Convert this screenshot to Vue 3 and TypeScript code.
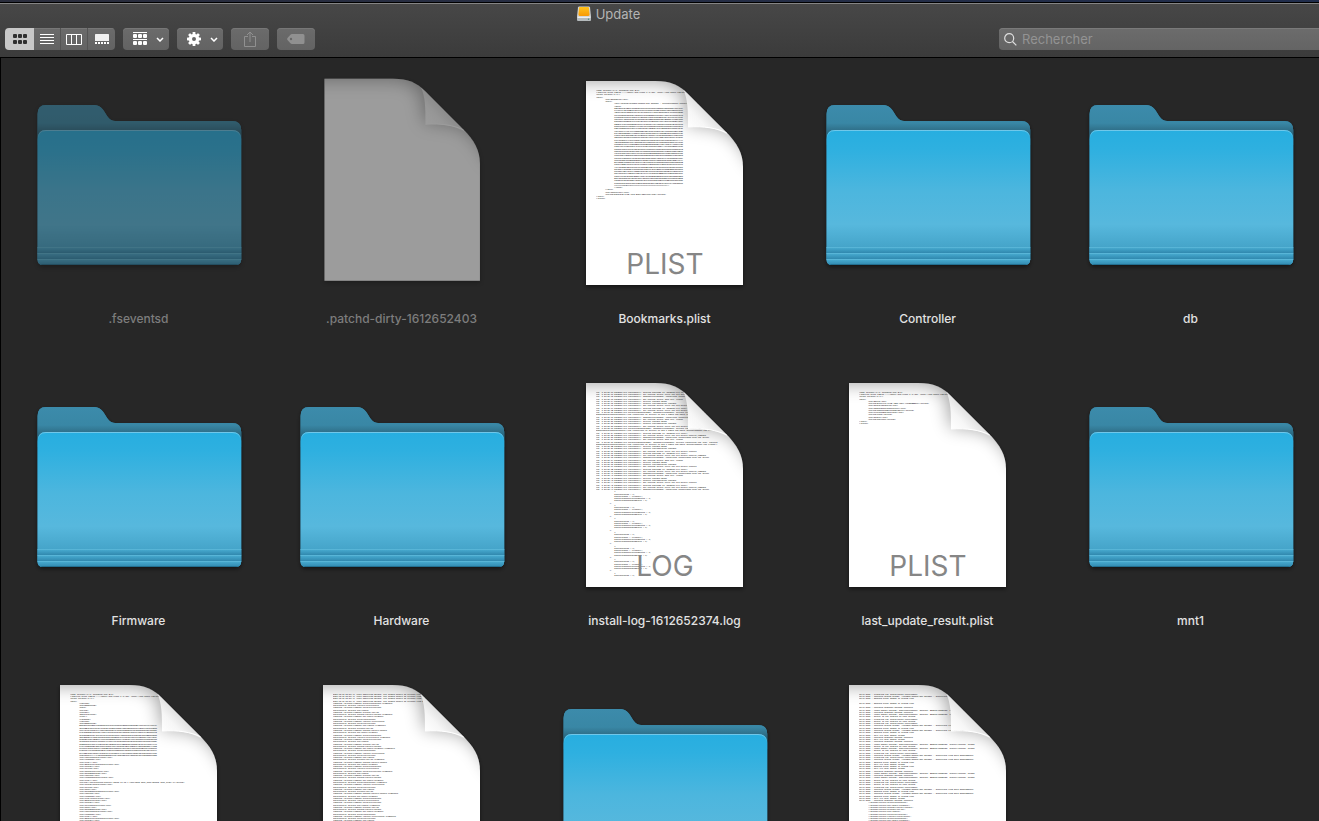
<script setup lang="ts">
import { ref } from 'vue'

type Kind = 'folder' | 'page'

interface Entry {
  id: string
  kind: Kind
  name?: string
  tag?: string
  dim?: boolean
  lines?: string[]
}

const query = ref('')
const view = ref('icons')

const pad = (n: number, s: string): string => ' '.repeat(n) + s

const ALPHABET = 'ABCDEFGHJKMNPQRSTUVWXYZabcdeghkmnopqsuvwxyz0234567899AAAAAA'

function dataBlock(rows: number, chars: number, indent: number): string[] {
  let seed = 17
  const out: string[] = []
  for (let r = 0; r < rows; r++) {
    let line = ''
    for (let c = 0; c < chars; c++) {
      seed = (seed * 1103 + 12345) % 65521
      line += ALPHABET[seed % ALPHABET.length]
    }
    out.push(pad(indent, line))
  }
  return out
}

const plistHead: string[] = [
  '<?xml version="1.0" encoding="UTF-8"?>',
  '<!DOCTYPE plist PUBLIC "-//Apple//DTD PLIST 1.0//EN" "http://www.apple.com/DTDs/PropertyList-1.0.dtd">',
  '<plist version="1.0">',
  '<dict>',
]

const bookmarks: string[] = [
  ...plistHead,
  pad(8, '<key>Bookmarks</key>'),
  pad(8, '<dict>'),
  pad(16, '<key>/System/Volumes/Update/Mac Manager - SoftwareUpdate Install Data</key>'),
  pad(16, '<data>'),
  ...dataBlock(34, 60, 16),
  pad(16, 'AAAAAAAAEAQAAAwAAAAAAAAAAAAAAAAAAAAAAAAAAAAAAA=='),
  pad(16, '</data>'),
  pad(8, '</dict>'),
  pad(8, '<key>Identifier</key>'),
  pad(8, '<string>D3C5F2A8-9A6B-4E7D-8C21-5B0F7E9A4C6D</string>'),
  '</dict>',
  '</plist>',
]

const logSamples: string[] = [
  'setting hostname to "MacBook-Pro.local"',
  'network configuration changed',
  'got startup policy auto set: reboot',
  'set startup policy cycle set.sys.policy.control_command',
  'got startup policy cycle set.sys.policy.restart',
  'service changed RESET',
  'SUOSUServiceDaemon: Connection established with the server',
]

const log: string[] = []
for (let i = 0; i < 38; i++) {
  log.push('Feb  6 23:59:' + (10 + i) + ' MacBook-Pro configd[54]: ' + logSamples[(i * 3) % 7])
  if (i === 8 || i === 13 || i === 17) {
    log.push('Feb  6 23:59:30 MacBook-Pro softwareupdated[286]: SUOSUServiceDaemon: Service connection was lost, waiting')
    log.push('RemovedInvalidationHandler("The connection to service on pid 0 named com.apple.SoftwareUpdate was closed")')
  }
}
for (let i = 0; i < 6; i++) {
  log.push(
    pad(16, '{'),
    pad(16, 'InstructValue = 0;'),
    pad(16, 'InstallPhase = "Prepare";'),
    pad(16, 'InstallPhasePercentComplete = 0;'),
    pad(16, 'InstallPhaseStepComplete = 0;'),
    pad(12, '},'),
  )
}
log.push(pad(16, '{'), pad(16, 'InstructValue = 0;'))

const result: string[] = [
  ...plistHead,
  pad(8, '<key>Build</key>'),
  pad(8, '<string>B4D1A7A0-9AC8-4B3D-A5E0-4F6CBDB8B60A</string>'),
  pad(8, '<key>RestartRequired</key>'),
  pad(8, '<key>UpdateResultIdentifier</key>'),
  pad(8, '<string>UpdateCompletedNormally</string>'),
  pad(8, '<key>PreviousBuildVersion</key>'),
  pad(8, '<string>19H2</string>'),
  pad(8, '<key>Result</key>'),
  pad(8, '<string>Success</string>'),
  '</dict>',
  '</plist>',
]

const keyNames = ['AppleID', 'string', 'true/', 'MinimumSystem', 'integer', 'Language', 'data', 'BundleVersion']
const manifest: string[] = [...plistHead]
for (let i = 0; i < 10; i++) manifest.push(pad(8, '<' + keyNames[(i * 3) % 8] + '>'))
manifest.push(...dataBlock(14, 68, 8))
for (let i = 0; i < 29; i++) {
  manifest.push(
    i === 11
      ? pad(8, '<string>/Applications/Install macOS 10.15.7 root=UUID auto_boot=DEVICE boot_args=-v</string>')
      : pad(8, '<key>' + keyNames[(i * 5) % 8] + (i % 3 ? '' : 'InstallPath') + '</key>'),
  )
}

const paths = ['driverextensions', 'kernelcollection', 'private/var/db', 'usr/share/firmware', 'Library/Preferences', 'bin/launch', 'System/Library/Caches']
const cleanup: string[] = []
for (let i = 0; i < 4; i++) {
  cleanup.push('2021-02-06 23:59:40 +0000 INSTALLER NOTICE: Got staged binary OS version from disk')
}
for (let i = 0; i < 53; i++) {
  cleanup.push((i % 2 ? 'successfully deleted ' : 'removing /private/ramdisk ') + paths[(i * 4) % 7] + (i % 5 === 0 ? '.framework' : ''))
}

const steps = [
  'Preparing the installation environment',
  'Found update package: MSUPrepareUpdate, MajorOS, BRIDGE=FIRMWARE, install=system, volume',
  'Will try next update volume',
  'Checking system volume: /Volumes/Update/Mac Manager - Installing from Data UpdateBundle',
  'Device is not enabled on this system',
  'Patching snapshot package contents',
  'Running brain daemon of system root',
]
const patch: string[] = []
for (let i = 0; i < 48; i++) {
  patch.push(i === 3 || i === 5 ? '' : '02/07/2021 : ' + steps[(i * 3 + (i >> 2)) % 7])
}
for (let i = 0; i < 9; i++) {
  patch.push(pad(8, '"/System/Library/' + paths[(i * 3) % 7] + '",'))
}

const entries: Entry[] = [
  { id: 'a1', kind: 'folder', name: '.fseventsd', dim: true },
  { id: 'a2', kind: 'page', name: '.patchd-dirty-1612652403', dim: true },
  { id: 'a3', kind: 'page', name: 'Bookmarks.plist', tag: 'PLIST', lines: bookmarks },
  { id: 'a4', kind: 'folder', name: 'Controller' },
  { id: 'a5', kind: 'folder', name: 'db' },
  { id: 'b1', kind: 'folder', name: 'Firmware' },
  { id: 'b2', kind: 'folder', name: 'Hardware' },
  { id: 'b3', kind: 'page', name: 'install-log-1612652374.log', tag: 'LOG', lines: log },
  { id: 'b4', kind: 'page', name: 'last_update_result.plist', tag: 'PLIST', lines: result },
  { id: 'b5', kind: 'folder', name: 'mnt1' },
  { id: 'c1', kind: 'page', lines: manifest },
  { id: 'c2', kind: 'page', lines: cleanup },
  { id: 'c3', kind: 'folder' },
  { id: 'c4', kind: 'page', lines: patch },
]
</script>

<template>
  <div class="finder">
    <header class="chrome">
      <h1 class="title">
        <svg class="drive" width="16" height="16" viewBox="0 0 16 16" aria-hidden="true">
          <path d="M2 1.5Q2.200 0.500 3.200 0.500H12.800Q13.800 0.500 14 1.500L15 11H1Z" fill="#d5d7d8" />
          <path d="M3 2Q3 1 4 1H12Q13 1 13 2L13.600 8.500Q13.600 10 12 10H4Q2.400 10 2.400 8.500Z" fill="url(#driveFace)" />
          <path d="M1 11H15V14Q15 15 14 15H2Q1 15 1 14Z" fill="#b4babc" />
          <path d="M1.500 11.500H14.500" stroke="#eceeee" />
          <circle cx="12.500" cy="13.200" r=".7" fill="#3c8a86" />
        </svg>
        <span>Update</span>
      </h1>

      <div class="toolbar">
        <div class="segments" role="group" aria-label="Présentation">
          <button type="button" class="seg" :class="{ on: view === 'icons' }" aria-label="Icônes" @click="view = 'icons'">
            <svg width="15" height="11" viewBox="-1 0 15 11" fill="currentColor">
              <rect v-for="n in 6" :key="n" :x="((n - 1) % 3) * 5" :y="n > 3 ? 6 : 0" width="4" height="4" rx="1" />
            </svg>
          </button>
          <button type="button" class="seg" :class="{ on: view === 'list' }" aria-label="Liste" @click="view = 'list'">
            <svg width="14" height="11" viewBox="0 0 14 11" fill="currentColor">
              <rect v-for="n in 4" :key="n" x="0" :y="(n - 1) * 3" width="14" height="1" />
            </svg>
          </button>
          <button type="button" class="seg" :class="{ on: view === 'columns' }" aria-label="Colonnes" @click="view = 'columns'">
            <svg width="16" height="11" viewBox="0 0 16 11" fill="none" stroke="currentColor">
              <path d="M.5 .5H15.500V10.500H.5ZM5.500 .5V10.500M10.500 .5V10.500" />
            </svg>
          </button>
          <button type="button" class="seg" :class="{ on: view === 'gallery' }" aria-label="Galerie" @click="view = 'gallery'">
            <svg width="14" height="11" viewBox="0 0 14 11" fill="currentColor">
              <rect x="0" y="0" width="14" height="7" rx=".6" opacity=".9" />
              <rect v-for="n in 5" :key="n" :x="(n - 1) * 3" y="8" width="2" height="2" />
            </svg>
          </button>
        </div>

        <button type="button" class="tool menu" aria-label="Grouper">
          <svg width="14" height="14" viewBox="0 0 14 14" fill="currentColor">
            <rect x="0" y="0" width="14" height="1" />
            <rect v-for="n in 3" :key="'t' + n" :x="(n - 1) * 5" y="2" width="4" height="4" rx="1" />
            <rect x="0" y="7" width="14" height="1" />
            <rect v-for="n in 3" :key="'b' + n" :x="(n - 1) * 5" y="9" width="4" height="4" rx="1" />
          </svg>
          <svg width="8" height="5" viewBox="0 0 8 5" fill="none" stroke="currentColor" stroke-width="1.500"><path d="M1 1L4 4L7 1" /></svg>
        </button>

        <button type="button" class="tool menu" aria-label="Action">
          <svg width="14" height="14" viewBox="-7 -7 14 14">
            <g fill="currentColor">
              <rect v-for="n in 8" :key="n" x="-1.400" y="-7" width="2.800" height="4" rx=".6" :transform="`rotate(${n * 45})`" />
            </g>
            <circle r="3.600" fill="none" stroke="currentColor" stroke-width="3.200" />
          </svg>
          <svg width="8" height="5" viewBox="0 0 8 5" fill="none" stroke="currentColor" stroke-width="1.500"><path d="M1 1L4 4L7 1" /></svg>
        </button>

        <button type="button" class="tool" aria-label="Partager" disabled>
          <svg width="12" height="16" viewBox="0 0 12 16" fill="none" stroke="currentColor">
            <path d="M4 5.500H.5V15.500H11.500V5.500H8M6 11V1M3 4L6 1L9 4" />
          </svg>
        </button>

        <button type="button" class="tool" aria-label="Tags" disabled>
          <svg width="18" height="10" viewBox="0 0 18 10">
            <path fill="currentColor" fill-rule="evenodd" d="M5 0H16Q17.500 0 17.500 1.500V8.500Q17.500 10 16 10H5Q4 10 3.200 9L.5 6Q-.2 5 .5 4L3.200 1Q4 0 5 0ZM4 3.800A1.200 1.200 0 1 0 4 6.200A1.200 1.200 0 1 0 4 3.800Z" />
          </svg>
        </button>

        <label class="search">
          <svg width="13" height="13" viewBox="0 0 13 13" fill="none" stroke="#dedede" stroke-width="1.200" aria-hidden="true">
            <circle cx="5.200" cy="5.200" r="4.500" /><path d="M8.500 8.500L12.300 12.300" />
          </svg>
          <input v-model="query" type="search" placeholder="Rechercher" aria-label="Rechercher" />
        </label>
      </div>
    </header>

    <main class="content">
      <ul class="grid">
        <li v-for="e in entries" :key="e.id" class="tile" :class="{ dim: e.dim }">
          <svg v-if="e.kind === 'folder'" class="art" width="241" height="224" viewBox="0 0 241 224" aria-hidden="true">
            <use href="#folder" />
          </svg>
          <svg v-else class="art" width="241" height="224" viewBox="0 0 241 224" aria-hidden="true">
            <g :transform="e.lines ? 'translate(42 6)' : 'translate(43.5 3.7) scale(.99)'">
              <path d="M0 0H69C85 0 93 4 102 13L140 51C151 62 157 72 157 86V204H0Z" fill="#fff" filter="url(#drop)" />
              <g clip-path="url(#pageClip)">
                <path d="M-30 1H70C86 2 92 7 98 16L102 45C120 43 134 47 144 53C154 62 162 74 168 86L190 90L180 -40H-30Z" fill="#000" opacity=".36" filter="url(#soft)" />
                <svg v-if="e.lines" class="print" x="10" y="8" width="147" height="194" viewBox="0 0 1300 1716">
                  <text v-for="(l, i) in e.lines" :key="i" x="0" :y="16 + i * 20">{{ l }}</text>
                </svg>
                <path d="M97 8C102 18 102 30 102 46C118 45 131 47 144 55Z" fill="url(#curl)" />
                <path d="M102 46C118 45 131 47 141 52" fill="none" stroke="#fff" stroke-width="1" />
              </g>
              <text v-if="e.tag" class="tag" x="79" y="193" text-anchor="middle">{{ e.tag }}</text>
            </g>
          </svg>
          <span v-if="e.name" class="name">{{ e.name }}</span>
        </li>
      </ul>
    </main>

    <svg class="defs" width="0" height="0" aria-hidden="true">
      <defs>
        <linearGradient id="driveFace" x1="0" y1="0" x2="0" y2="1">
          <stop offset="0" stop-color="#ffc21c" /><stop offset="1" stop-color="#f79a05" />
        </linearGradient>
        <linearGradient id="back" gradientUnits="userSpaceOnUse" x1="0" y1="30" x2="0" y2="58">
          <stop offset="0" stop-color="#3c8bab" /><stop offset=".65" stop-color="#3987a5" /><stop offset="1" stop-color="#2b677f" />
        </linearGradient>
        <linearGradient id="front" x1="0" y1="0" x2="0" y2="1">
          <stop offset="0" stop-color="#27aee0" /><stop offset=".14" stop-color="#2eb0e0" />
          <stop offset=".45" stop-color="#4cb6de" /><stop offset=".7" stop-color="#57b8dd" />
          <stop offset=".87" stop-color="#45a4c9" /><stop offset="1" stop-color="#3b9cc2" />
        </linearGradient>
        <linearGradient id="rib" x1="0" y1="0" x2="0" y2="1">
          <stop offset="0" stop-color="#4aaed3" /><stop offset="1" stop-color="#3088ae" />
        </linearGradient>
        <linearGradient id="curl" gradientUnits="userSpaceOnUse" x1="102" y1="46" x2="121" y2="28">
          <stop offset="0" stop-color="#fff" /><stop offset=".5" stop-color="#f6f6f6" /><stop offset="1" stop-color="#dcdcdc" />
        </linearGradient>
        <linearGradient id="rim" gradientUnits="userSpaceOnUse" x1="0" y1="55" x2="0" y2="63">
          <stop offset="0" stop-color="#74c9ea" /><stop offset="1" stop-color="#74c9ea" stop-opacity="0" />
        </linearGradient>
        <filter id="soft" x="-30%" y="-50%" width="160%" height="200%"><feGaussianBlur stdDeviation="9" /></filter>
        <filter id="drop" x="-10%" y="-10%" width="120%" height="120%"><feDropShadow dx="0" dy="2" stdDeviation="2" flood-color="#000" flood-opacity=".5" /></filter>
        <clipPath id="pageClip"><path d="M0 0H69C85 0 93 4 102 13L140 51C151 62 157 72 157 86V204H0Z" /></clipPath>
        <clipPath id="frontClip"><rect x="19.600" y="55" width="203.600" height="135" rx="5" /></clipPath>
        <g id="folder">
          <path d="M19.600 39Q19.600 30 28 30H76C88 30 87 46 97 46H214Q223.200 46 223.200 55V184Q223.200 190 217 190H25Q19.600 190 19.600 184Z" fill="#2f83a6" filter="url(#drop)" />
          <path d="M19.600 39Q19.600 30 28 30H76C88 30 87 46 97 46H214Q223.200 46 223.200 55V70H19.600Z" fill="url(#back)" />
          <path d="M19.600 64Q19.600 55 28 55H214Q223.200 55 223.200 64V184Q223.200 190 217 190H25Q19.600 190 19.600 184Z" fill="url(#front)" />
          <path d="M20 64Q20 55.500 28 55.500H214Q222.800 55.500 222.800 64" fill="none" stroke="url(#rim)" />
          <g clip-path="url(#frontClip)">
            <g v-for="n in 3" :key="n">
              <rect x="19" :y="166 + n * 6" width="205" height="6" fill="url(#rib)" />
              <rect x="19" :y="166 + n * 6" width="205" height="1" fill="#58b5d7" />
            </g>
            <rect x="19" y="189" width="205" height="1" fill="#236f90" />
          </g>
        </g>
      </defs>
    </svg>
  </div>
</template>

<style>
html,
body {
  margin: 0;
  background: #272727;
}
</style>

<style scoped>
.finder {
  height: 100vh;
  display: flex;
  flex-direction: column;
  overflow: hidden;
  background: #272727;
  color: #e2e2e2;
  font-family: Inter, "Noto Sans", sans-serif;
}

.chrome {
  flex: none;
  border-bottom: 1px solid #000;
  background:
    linear-gradient(90deg, #2a2d3c, #202d4c) 0 0 / 100% 2px no-repeat,
    linear-gradient(#000, #000) 0 2px / 100% 1px no-repeat,
    linear-gradient(#858585, #858585) 0 3px / 100% 1px no-repeat,
    linear-gradient(#484848, #3b3b3b);
  padding: 4px 0 7px 5px;
}

.title {
  display: flex;
  align-items: center;
  justify-content: center;
  gap: 4px;
  height: 20px;
  margin: 0 0 4px;
  padding-right: 108px;
  color: #b4b4b4;
  font-size: 13px;
  font-weight: 400;
  line-height: 20px;
}

.toolbar {
  display: flex;
  gap: 8px;
  height: 22px;
}

.segments {
  display: flex;
  overflow: hidden;
  border-radius: 4px;
}

.seg,
.tool {
  display: flex;
  align-items: center;
  justify-content: center;
  border: 0;
  padding: 0;
  background: linear-gradient(#6b6b6b, #636363);
  box-shadow: inset 0 1px #777;
  color: #fff;
}

.seg {
  width: 27px;
  border-right: 1px solid #545454;
}

.seg:first-child {
  width: 29px;
  border-right: 0;
}

.seg:last-child {
  border-right: 0;
}

.seg.on {
  background: #c8c8c8;
  box-shadow: none;
  color: #303030;
}

.tool {
  width: 38px;
  border-radius: 4px;
}

.tool.menu {
  width: 46px;
  gap: 9px;
  padding-left: 5px;
}

.tool:disabled {
  color: #909090;
}

.search {
  display: flex;
  align-items: center;
  gap: 5px;
  width: 320px;
  margin-left: auto;
  padding-left: 5px;
  box-sizing: border-box;
  border-radius: 4px 0 0 4px;
  background: linear-gradient(#6c6c6c, #646464);
  box-shadow: inset 0 1px #7a7a7a;
}

.search input {
  flex: 1;
  min-width: 0;
  border: 0;
  padding: 0;
  outline: 0;
  appearance: none;
  background: none;
  color: #fff;
  font: 400 13px/20px Inter, "Noto Sans", sans-serif;
}

.search input::placeholder {
  color: #939393;
  opacity: 1;
}

.content {
  flex: 1;
  min-height: 0;
  overflow: hidden;
  border-left: 1px solid #000;
}

.grid {
  display: grid;
  grid-template-columns: repeat(5, 1fr);
  margin: 0 -3px 0 6px;
  padding: 0;
  list-style: none;
}

.tile {
  display: flex;
  flex-direction: column;
  align-items: center;
  padding: 17px 0 31px;
}

.art {
  display: block;
  margin-bottom: 10px;
}

.dim .art {
  opacity: .54;
}

.name {
  font-size: 12px;
  font-weight: 500;
  line-height: 20px;
  white-space: nowrap;
}

.dim .name {
  color: #7d7d7d;
}

.print text {
  fill: #444;
  font-family: "Liberation Mono", monospace;
  font-size: 17px;
  font-weight: 700;
  white-space: pre;
}

.tag {
  fill: #868686;
  font-size: 28px;
  font-weight: 400;
}

.defs {
  position: absolute;
}
</style>
